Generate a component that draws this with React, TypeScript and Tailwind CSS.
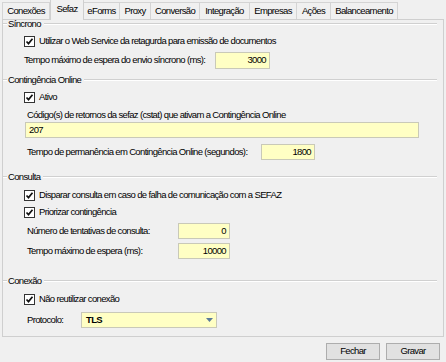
import React from 'react';

const tabs = [
  { label: 'Conexões', w: 'w-[48px]' },
  { label: 'Sefaz', w: 'w-[34px]', active: true },
  { label: 'eForms', w: 'w-[36px]' },
  { label: 'Proxy', w: 'w-[31px]' },
  { label: 'Conversão', w: 'w-[49px]' },
  { label: 'Integração', w: 'w-[50px]' },
  { label: 'Empresas', w: 'w-[47px]' },
  { label: 'Ações', w: 'w-[34px]' },
  { label: 'Balanceamento', w: 'w-[67px]' },
];

const GroupHeader: React.FC<{ title: string; className?: string }> = ({ title, className = '' }) => (
  <div className={`flex items-center h-[10px] pr-[6px] shrink-0 ${className}`}>
    <div className="w-[4px] h-[2px] border-t border-b border-t-[#d0d0d0] border-b-white" />
    <span className="px-[1px] leading-[10px]">{title}</span>
    <div className="flex-1 h-[2px] border-t border-b border-t-[#d0d0d0] border-b-white ml-[2px]" />
  </div>
);

const Check: React.FC<{ label: string; className?: string }> = ({ label, className = '' }) => (
  <div className={`flex items-center h-[14px] pl-[21px] shrink-0 ${className}`}>
    <div className="w-[11px] h-[11px] border border-[#333] bg-white flex items-center justify-center">
      <svg width="9" height="9" viewBox="0 0 9 9">
        <path d="M1.5 4.5 L3.5 6.6 L7.5 1.8" fill="none" stroke="#111" strokeWidth="1.7" />
      </svg>
    </div>
    <span className="ml-[4px]">{label}</span>
  </div>
);

const Field: React.FC<{ value: string; className?: string; left?: boolean }> = ({ value, className = '', left }) => (
  <div
    className={`h-[16px] shrink-0 bg-[#ffffc4] border border-[#c9c9b8] flex items-center px-[3px] ${
      left ? 'justify-start' : 'justify-end'
    } ${className}`}
  >
    {value}
  </div>
);

const App: React.FC = () => {
  return (
    <div className="w-[446px] h-[362px] bg-[#f0f0f0] overflow-hidden whitespace-nowrap text-[9.5px] tracking-[-0.65px] text-black font-['Liberation_Sans',Arial,sans-serif]">
      {/* Tabs */}
      <div className="flex items-end h-[19px] pl-[2px]">
        {tabs.map((t) =>
          t.active ? (
            <div
              key={t.label}
              className={`${t.w} h-[21px] -mb-px bg-[#f0f0f0] border border-b-0 border-[#cfcfcf] flex items-center justify-center relative z-10 pb-[2px]`}
            >
              {t.label}
            </div>
          ) : (
            <div
              key={t.label}
              className={`${t.w} h-[17px] bg-[#f0f0f0] border border-b-0 border-l-0 first:border-l border-[#d4d4d4] flex items-center justify-center`}
            >
              {t.label}
            </div>
          )
        )}
      </div>

      {/* Panel */}
      <div className="mx-[2px] h-[318px] border border-[#cfcfcf] flex flex-col overflow-hidden">
        <GroupHeader title="Síncrono" className="-mt-[1px]" />
        <Check label="Utilizar o Web Service da retagurda para emissão de documentos" className="mt-[5px]" />
        <div className="flex items-center mt-[4px] pl-[21px] shrink-0">
          <span className="w-[191px]">Tempo máximo de espera do envio síncrono (ms):</span>
          <Field value="3000" className="w-[55px] h-[17px]" />
        </div>

        <GroupHeader title="Contingência Online" className="mt-[6px]" />
        <Check label="Ativo" className="mt-[5px]" />
        <div className="h-[14px] flex items-center pl-[24px] mt-[4px] shrink-0">
          Código(s) de retornos da sefaz (cstat) que ativam a Contingência Online
        </div>
        <Field value="207" left className="ml-[22px] w-[394px]" />
        <div className="flex items-center mt-[6px] pl-[24px] shrink-0">
          <span className="w-[234px]">Tempo de permanência em Contingência Online (segundos):</span>
          <Field value="1800" className="w-[54px]" />
        </div>

        <GroupHeader title="Consulta" className="mt-[12px]" />
        <Check label="Disparar consulta em caso de falha de comunicação com a SEFAZ" className="mt-[6px]" />
        <Check label="Priorizar contingência" className="mt-[3px]" />
        <div className="flex items-center mt-[4px] pl-[24px] shrink-0">
          <span className="w-[151px]">Número de tentativas de consulta:</span>
          <Field value="0" className="w-[52px]" />
        </div>
        <div className="flex items-center mt-[4px] pl-[24px] shrink-0">
          <span className="w-[151px]">Tempo máximo de espera (ms):</span>
          <Field value="10000" className="w-[52px]" />
        </div>

        <GroupHeader title="Conexão" className="mt-[17px]" />
        <Check label="Não reutilizar conexão" className="mt-[6px]" />
        <div className="flex items-center mt-[6px] pl-[24px] shrink-0">
          <span className="w-[54px]">Protocolo:</span>
          <div className="w-[136px] h-[16px] bg-[#ffffc4] border border-[#c9c9b8] flex items-center">
            <span className="flex-1 pl-[4px] font-bold">TLS</span>
            <div className="w-[14px] h-full flex items-center justify-center">
              <svg width="7" height="4" viewBox="0 0 7 4">
                <path d="M0 0 H7 L3.5 4 Z" fill="#5b7a99" />
              </svg>
            </div>
          </div>
        </div>
      </div>

      {/* Buttons */}
      <div className="flex justify-end gap-[6px] pr-[6px] mt-[6px]">
        <button className="w-[54px] h-[17px] bg-[#e1e1e1] border border-[#adadad] flex items-center justify-center">
          Fechar
        </button>
        <button className="w-[54px] h-[17px] bg-[#e1e1e1] border border-[#adadad] flex items-center justify-center">
          Gravar
        </button>
      </div>
    </div>
  );
};

export default App;
